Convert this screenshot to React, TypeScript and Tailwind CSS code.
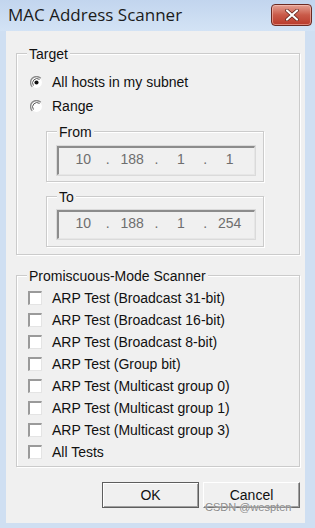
import React from "react";

const rows = [
  "ARP Test (Broadcast 31-bit)",
  "ARP Test (Broadcast 16-bit)",
  "ARP Test (Broadcast 8-bit)",
  "ARP Test (Group bit)",
  "ARP Test (Multicast group 0)",
  "ARP Test (Multicast group 1)",
  "ARP Test (Multicast group 3)",
  "All Tests",
];

function Radio({ checked }: { checked?: boolean }) {
  return (
    <svg width="13" height="13" viewBox="0 0 12 12" className="shrink-0">
      <circle cx="6" cy="6" r="5" fill="#fff" />
      <path d="M9.9 2.1 A5.5 5.5 0 0 0 2.1 9.9" stroke="#8a8a8a" strokeWidth="1.3" fill="none" />
      <path d="M8.8 3.2 A4 4 0 0 0 3.2 8.8" stroke="#555" strokeWidth="0.9" fill="none" />
      {checked && <circle cx="6" cy="6" r="1.9" fill="#111" />}
    </svg>
  );
}

function Checkbox() {
  return (
    <span className="block w-[14px] h-[14px] shrink-0 bg-white border-t-2 border-l-2 border-[#9a9a9a] border-r border-b border-r-[#e4e4e4] border-b-[#e4e4e4]" />
  );
}

function GroupBox({
  label,
  className,
  children,
}: {
  label: string;
  className: string;
  children: React.ReactNode;
}) {
  return (
    <div
      className={`relative border border-[#cbcbcb] shadow-[inset_1px_1px_0_#fff,1px_1px_0_#fff] ${className}`}
    >
      <span className="absolute -top-[9px] left-[10px] bg-[#f0f0f0] px-[2px] text-[14px] leading-[18px] text-[#111]">
        {label}
      </span>
      {children}
    </div>
  );
}

function IpField({ parts }: { parts: string[] }) {
  return (
    <div className="h-[29px] flex items-center pb-[3px] border-t-2 border-l-2 border-[#8c8c8c] border-r border-b border-r-[#e6e6e6] border-b-[#e6e6e6] shadow-[0_0_0_1px_#dadada] bg-[#f0f0f0] text-[14px] text-[#6e6e6e]">
      {parts.map((p, i) => (
        <React.Fragment key={i}>
          {i > 0 && <span className="w-0 flex justify-center">.</span>}
          <span className="flex-1 text-center">{p}</span>
        </React.Fragment>
      ))}
    </div>
  );
}

export default function App() {
  return (
    <div className="w-[315px] h-[528px] bg-[#cfdff2] flex flex-col font-['Liberation_Sans',Arial,sans-serif] text-[#111]">
      {/* title bar */}
      <div className="h-[31px] flex items-center justify-between pl-[8px] pr-[3px] bg-gradient-to-b from-[#c2d5ee] to-[#d3e3f5]">
        <span className="font-['Open_Sans',sans-serif] text-[17px] leading-none text-[#1b1b1b] pb-[2px]">
          MAC Address Scanner
        </span>
        <div className="w-[41px] h-[22px] mb-[2px] rounded-[4px] border border-[#6b2a22] bg-gradient-to-b from-[#e3a093] via-[#c95a49] to-[#b9392a] shadow-[inset_0_0_0_1px_rgba(255,210,200,0.5)] flex items-center justify-center">
          <svg width="14" height="12" viewBox="0 0 14 12">
            <path d="M2 1.5 L12 10.5 M12 1.5 L2 10.5" stroke="#5a1e17" strokeWidth="3.6" strokeLinecap="round" />
            <path d="M2 1.5 L12 10.5 M12 1.5 L2 10.5" stroke="#fff" strokeWidth="2.2" strokeLinecap="round" />
          </svg>
        </div>
      </div>

      {/* client area */}
      <div className="ml-[6px] mr-[10px] mb-[5px] flex-1 bg-[#f0f0f0] pl-[10px] pr-[5px] flex flex-col">
        <GroupBox label="Target" className="mt-[22px] pt-[16px] pb-[7px]">
          <div className="flex items-center h-[24px] pl-[13px] gap-[9px] text-[14px]">
            <Radio checked />
            <span>All hosts in my subnet</span>
          </div>
          <div className="flex items-center h-[24px] pl-[13px] gap-[9px] text-[14px]">
            <Radio />
            <span>Range</span>
          </div>
          <GroupBox label="From" className="mt-[13px] ml-[29px] mr-[35px] pt-[14px] pb-[6px] pl-[10px] pr-[8px]">
            <IpField parts={["10", "188", "1", "1"]} />
          </GroupBox>
          <GroupBox label="To" className="mt-[14px] ml-[29px] mr-[35px] pt-[13px] pb-[7px] pl-[10px] pr-[8px]">
            <IpField parts={["10", "188", "1", "254"]} />
          </GroupBox>
        </GroupBox>

        <GroupBox label="Promiscuous-Mode Scanner" className="mt-[20px] pt-[11px] pb-[3px] pl-[11px]">
          {rows.map((r) => (
            <div key={r} className="flex items-center h-[22px] gap-[10px] text-[14px]">
              <Checkbox />
              <span>{r}</span>
            </div>
          ))}
        </GroupBox>

        <div className="relative mt-[15px] flex justify-end gap-[4px]">
          <button className="w-[97px] h-[26px] border border-[#5e5e5e] bg-[#f0f0f0] shadow-[inset_1px_1px_0_#fff,inset_-1px_-1px_0_#a0a0a0] text-[14px] text-[#111]">
            OK
          </button>
          <button className="w-[97px] h-[26px] border-t border-l border-t-white border-l-white border-r border-b border-r-[#6a6a6a] border-b-[#6a6a6a] bg-[#f0f0f0] shadow-[inset_-1px_-1px_0_#a0a0a0] text-[14px] text-[#111]">
            Cancel
          </button>
          <span className="absolute left-[189px] top-[19px] text-[11px] leading-[12px] text-[#8c8c8c] [text-shadow:0_0_2px_#fff]">
            CSDN @wespten
          </span>
        </div>
      </div>
    </div>
  );
}
